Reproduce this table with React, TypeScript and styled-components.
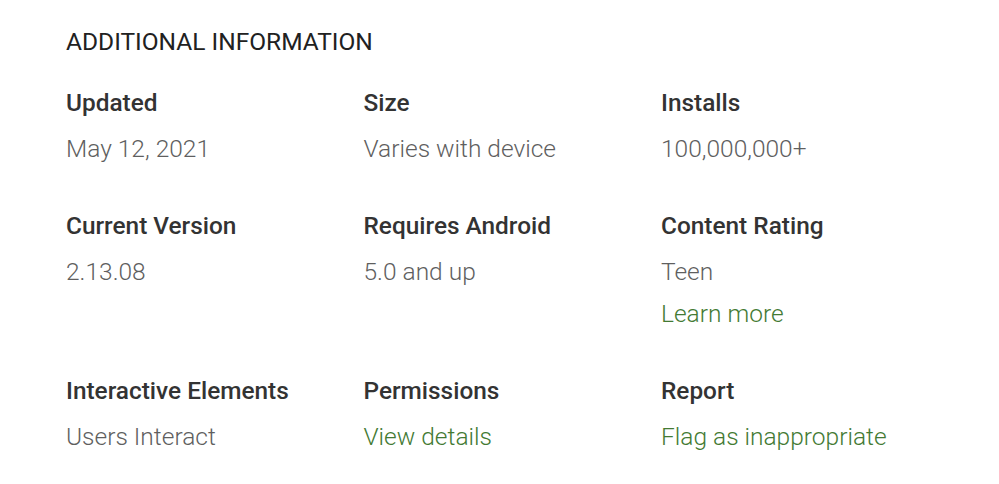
import React from "react";
import styled, { createGlobalStyle } from "styled-components";

const Global = createGlobalStyle`
  html, body { margin: 0; padding: 0; background: #fff; }
  body { font-family: Roboto, "Noto Sans", Arial, sans-serif; }
`;

const Section = styled.section`
  padding: 25px 0 0 66px;
`;

const Heading = styled.h2`
  margin: 0 0 26.5px 0;
  font-size: 24.5px;
  font-weight: 400;
  line-height: 34px;
  color: #212121;
`;

const Grid = styled.div`
  display: grid;
  grid-template-columns: repeat(3, 297.5px);
  row-gap: 38.5px;
`;

const Item = styled.div`
  display: flex;
  flex-direction: column;
`;

const Label = styled.div`
  font-size: 24.4px;
  font-weight: 500;
  line-height: 33px;
  color: #333;
  margin-bottom: 9.5px;
`;

const Value = styled.div<{ $link?: boolean }>`
  font-size: 24.5px;
  font-weight: 300;
  line-height: 42px;
  color: ${(p) => (p.$link ? "#437a33" : "#5f5f5f")};
`;

type Entry = { label: string; values: { text: string; link?: boolean }[] };

const rows: Entry[] = [
  { label: "Updated", values: [{ text: "May 12, 2021" }] },
  { label: "Size", values: [{ text: "Varies with device" }] },
  { label: "Installs", values: [{ text: "100,000,000+" }] },
  { label: "Current Version", values: [{ text: "2.13.08" }] },
  { label: "Requires Android", values: [{ text: "5.0 and up" }] },
  {
    label: "Content Rating",
    values: [{ text: "Teen" }, { text: "Learn more", link: true }],
  },
  { label: "Interactive Elements", values: [{ text: "Users Interact" }] },
  { label: "Permissions", values: [{ text: "View details", link: true }] },
  { label: "Report", values: [{ text: "Flag as inappropriate", link: true }] },
];

export default function App() {
  return (
    <>
      <Global />
      <Section>
        <Heading>ADDITIONAL INFORMATION</Heading>
        <Grid>
          {rows.map((r) => (
            <Item key={r.label}>
              <Label>{r.label}</Label>
              {r.values.map((v) => (
                <Value key={v.text} $link={v.link}>
                  {v.text}
                </Value>
              ))}
            </Item>
          ))}
        </Grid>
      </Section>
    </>
  );
}
